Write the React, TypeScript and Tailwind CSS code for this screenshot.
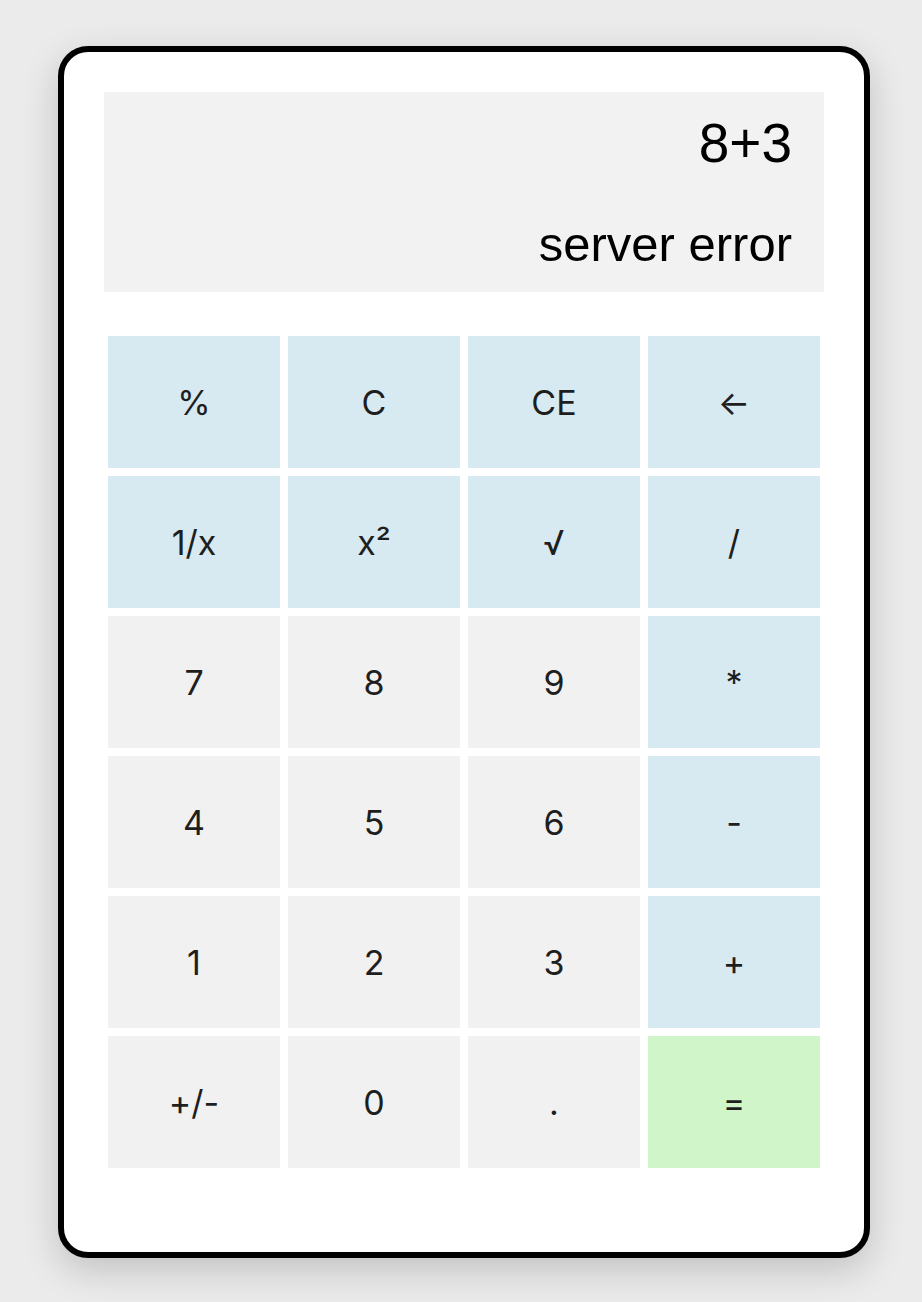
import React from "react";

type Btn = { label: string; kind: "op" | "num" | "eq" };

const rows: Btn[][] = [
  [
    { label: "%", kind: "op" },
    { label: "C", kind: "op" },
    { label: "CE", kind: "op" },
    { label: "←", kind: "op" },
  ],
  [
    { label: "1/x", kind: "op" },
    { label: "x²", kind: "op" },
    { label: "√", kind: "op" },
    { label: "/", kind: "op" },
  ],
  [
    { label: "7", kind: "num" },
    { label: "8", kind: "num" },
    { label: "9", kind: "num" },
    { label: "*", kind: "op" },
  ],
  [
    { label: "4", kind: "num" },
    { label: "5", kind: "num" },
    { label: "6", kind: "num" },
    { label: "-", kind: "op" },
  ],
  [
    { label: "1", kind: "num" },
    { label: "2", kind: "num" },
    { label: "3", kind: "num" },
    { label: "+", kind: "op" },
  ],
  [
    { label: "+/-", kind: "num" },
    { label: "0", kind: "num" },
    { label: ".", kind: "num" },
    { label: "=", kind: "eq" },
  ],
];

const bg: Record<Btn["kind"], string> = {
  op: "bg-[#d7e9f1]",
  num: "bg-[#f1f1f1]",
  eq: "bg-[#d0f5c9]",
};

export default function App() {
  return (
    <div className="min-h-[1302px] w-full bg-[#ebebeb] pt-[46px] pl-[58px]">
      <div className="w-[812px] h-[1212px] rounded-[30px] border-[6px] border-black bg-white shadow-[0_12px_36px_rgba(0,0,0,0.18)] p-[40px]">
        <div className="h-[200px] bg-[#f2f2f2] pr-[32px] flex flex-col items-end text-black font-['Liberation_Sans',Arial,sans-serif] leading-none">
          <div className="mt-[24px] text-[55px]">8+3</div>
          <div className="mt-[49px] text-[49px]">server error</div>
        </div>
        <div className="mt-[40px] p-[4px] grid grid-cols-4 gap-[8px] font-['Inter',sans-serif] text-[34px] text-[#1e1e1e]">
          {rows.flat().map((b, i) => (
            <div
              key={i}
              className={`h-[132px] flex items-center justify-center ${bg[b.kind]}`}
            >
              {b.label}
            </div>
          ))}
        </div>
      </div>
    </div>
  );
}
